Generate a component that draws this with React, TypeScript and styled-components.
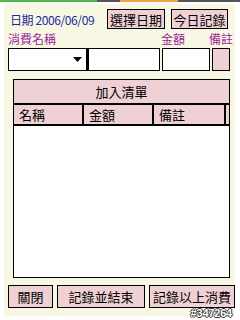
import React from 'react';
import styled, { createGlobalStyle } from 'styled-components';

const GlobalStyle = createGlobalStyle`
  html, body {
    margin: 0;
    padding: 0;
    background: #ffffff;
  }
  body {
    width: 240px;
    height: 320px;
    overflow: hidden;
    font-family: "Noto Sans CJK TC", "Liberation Sans", sans-serif;
  }
`;

const pink = '#efd0d4';
const cream = '#f7f7e3';

const Screen = styled.div`
  width: 240px;
  height: 320px;
  display: flex;
  flex-direction: column;
`;

const StatusStrip = styled.div`
  display: flex;
  height: 2px;
`;

const StripPart = styled.div<{ $w: number; $c: string }>`
  width: ${(p) => p.$w}px;
  background: ${(p) => p.$c};
`;

const Panel = styled.div`
  margin: 2px 5px 4px 4px;
  flex: 1;
  background: ${cream};
  display: flex;
  flex-direction: column;
  padding: 5px 0 0 4px;
  position: relative;
`;

const TopRow = styled.div`
  display: flex;
  align-items: center;
  height: 20px;
`;

const DateText = styled.div`
  flex: none;
  width: 95px;
  color: #1c2a9c;
  font-size: 12px;
  padding-left: 2px;
  box-sizing: border-box;
  letter-spacing: -0.4px;
  white-space: nowrap;
`;

const Button = styled.div<{ $w: number }>`
  flex: none;
  width: ${(p) => p.$w}px;
  height: 100%;
  box-sizing: border-box;
  border: 1px solid #000;
  background: ${pink};
  display: flex;
  align-items: center;
  justify-content: center;
  font-size: 13px;
  color: #000;
  white-space: nowrap;
`;

const ButtonGap = styled.div<{ $w: number }>`
  flex: none;
  width: ${(p) => p.$w}px;
`;

const LabelRow = styled.div`
  display: flex;
  height: 16px;
  margin-top: 2px;
  color: #9b1f9b;
  font-size: 12px;
  line-height: 16px;
`;

const Label = styled.div<{ $w: number }>`
  width: ${(p) => p.$w}px;
`;

const InputRow = styled.div`
  display: flex;
  height: 23px;
  margin-top: 1px;
`;

const SelectBox = styled.div`
  width: 80px;
  box-sizing: border-box;
  border: 1px solid #000;
  border-right-width: 2px;
  background: #fff;
  display: flex;
  align-items: center;
  justify-content: flex-end;
  padding-right: 4px;
`;

const TextBox = styled.div<{ $w: number; $ml: number }>`
  width: ${(p) => p.$w}px;
  margin-left: ${(p) => p.$ml}px;
  box-sizing: border-box;
  border: 1px solid #000;
  background: #fff;
`;

const NoteBox = styled.div`
  width: 18px;
  margin-left: 2px;
  box-sizing: border-box;
  border: 1px solid #000;
  background: ${pink};
`;

const ListBox = styled.div`
  margin: 8px 0 0 5px;
  width: 217px;
  height: 199px;
  box-sizing: border-box;
  border: 1px solid #000;
  background: #fff;
  display: flex;
  flex-direction: column;
`;

const ListTitle = styled.div`
  height: 23px;
  background: ${pink};
  border-bottom: 1px solid #000;
  display: flex;
  align-items: center;
  justify-content: center;
  font-size: 13px;
`;

const HeadRow = styled.div`
  display: flex;
  height: 19px;
  background: ${pink};
  border-bottom: 2px solid #000;
  border-top: 1px solid #000;
`;

const HeadCell = styled.div<{ $w: number }>`
  width: ${(p) => p.$w}px;
  box-sizing: border-box;
  border-right: 2px solid #000;
  font-size: 13px;
  line-height: 19px;
  padding-left: 5px;
`;

const BottomRow = styled.div`
  display: flex;
  height: 23px;
  margin-top: 7px;
`;

const Tag = styled.div`
  position: absolute;
  right: 3px;
  bottom: -2px;
  font-family: "Liberation Sans", sans-serif;
  font-weight: bold;
  font-size: 11px;
  line-height: 10px;
  color: #fff;
  letter-spacing: -0.2px;
  text-shadow: 1px 0 0 #333, -1px 0 0 #333, 0 1px 0 #333, 0 -1px 0 #333;
`;

const Arrow = () => (
  <svg width="9" height="5" viewBox="0 0 9 5">
    <path d="M0 0h9L4.5 5z" fill="#000" />
  </svg>
);

export default function App() {
  return (
    <Screen>
      <GlobalStyle />
      <StatusStrip>
        <StripPart $w={97} $c="#4cb848" />
        <StripPart $w={23} $c="#555" />
        <StripPart $w={58} $c="#f0a040" />
        <StripPart $w={62} $c="#555" />
      </StatusStrip>
      <Panel>
        <TopRow>
          <DateText>日期 2006/06/09</DateText>
          <ButtonGap $w={4} />
          <Button $w={58}>選擇日期</Button>
          <ButtonGap $w={6} />
          <Button $w={57}>今日記錄</Button>
        </TopRow>
        <LabelRow>
          <Label $w={153}>消費名稱</Label>
          <Label $w={48}>金額</Label>
          <Label $w={24}>備註</Label>
        </LabelRow>
        <InputRow>
          <SelectBox>
            <Arrow />
          </SelectBox>
          <TextBox $w={72} $ml={0} />
          <TextBox $w={48} $ml={2} />
          <NoteBox />
        </InputRow>
        <ListBox>
          <ListTitle>加入清單</ListTitle>
          <HeadRow>
            <HeadCell $w={70}>名稱</HeadCell>
            <HeadCell $w={70}>金額</HeadCell>
            <HeadCell $w={72}>備註</HeadCell>
          </HeadRow>
        </ListBox>
        <BottomRow>
          <Button $w={45}>關閉</Button>
          <ButtonGap $w={4} />
          <Button $w={88}>記錄並結束</Button>
          <ButtonGap $w={4} />
          <Button $w={86}>記錄以上消費</Button>
        </BottomRow>
        <Tag>#347264</Tag>
      </Panel>
    </Screen>
  );
}
